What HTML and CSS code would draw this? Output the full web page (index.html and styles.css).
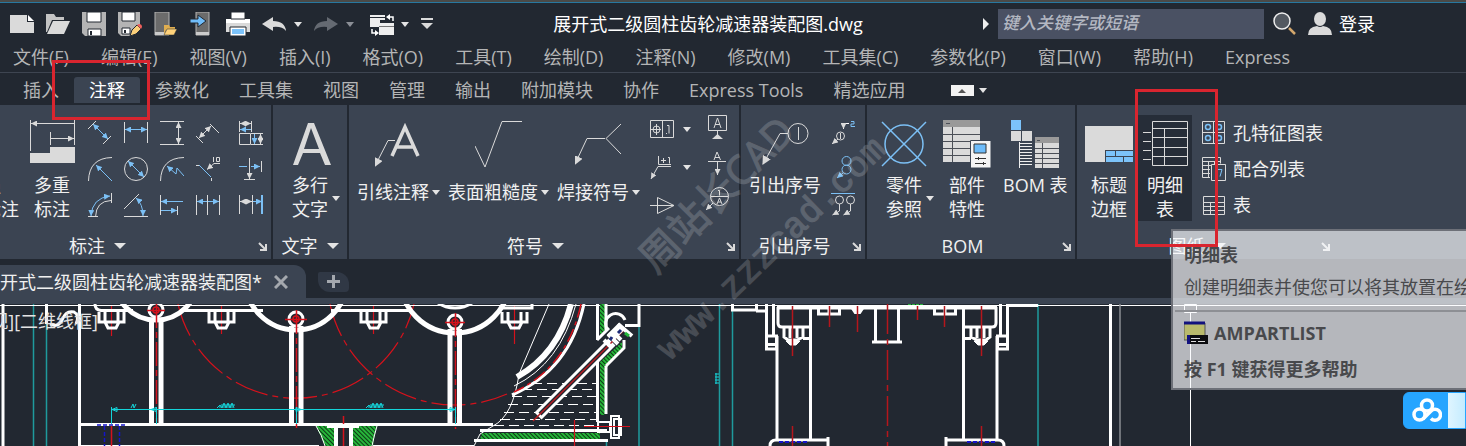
FILE: index.html
```html
<!DOCTYPE html>
<html lang="zh-CN">
<head>
    <title>展开式二级圆柱齿轮减速器装配图.dwg</title>
    <meta charset="utf-8">
    <meta name="viewport" content="width=device-width, initial-scale=1">
    <link rel="stylesheet" href="styles.css">
</head>
<body>
    <!-- shared arrow heads and hatches -->
    <svg class="defs" width="0" height="0" aria-hidden="true">
        <defs>
            <marker id="aw" viewBox="0 0 6 6" refX="6" refY="3" markerWidth="6" markerHeight="6" markerUnits="userSpaceOnUse" orient="auto-start-reverse"><path d="M0 0 6 3 0 6z" fill="#dadada"/></marker>
            <marker id="ab" viewBox="0 0 6 6" refX="6" refY="3" markerWidth="6" markerHeight="6" markerUnits="userSpaceOnUse" orient="auto-start-reverse"><path d="M0 0 6 3 0 6z" fill="#7cc0f5"/></marker>
            <marker id="al" viewBox="0 0 8 8" refX="7" refY="4" markerWidth="9" markerHeight="9" markerUnits="userSpaceOnUse" orient="auto-start-reverse"><path d="M0 0 8 4 0 8z" fill="#dadada"/></marker>
            <pattern id="hatch" width="3" height="3" patternUnits="userSpaceOnUse" patternTransform="rotate(-45)"><rect width="3" height="3" fill="#0d3a16"/><rect width="2" height="3" fill="#27b53a"/></pattern>
        </defs>
    </svg>

    <header class="titlebar">
        <div class="quick">
            <button title="新建"><svg width="24" height="24"><path d="M0 3h17v7h7v11H0z" fill="#dadada"/><path d="M18 3l6 6h-6z" fill="#fff"/></svg></button>
            <button title="打开"><svg width="24" height="24"><path d="M0 2h8l2 3h8v3H6L1 20H0z" fill="#c4c4c4"/><path d="M7 9h17l-6 13H1z" fill="#dadada"/></svg></button>
            <button title="保存"><svg width="24" height="24"><path d="M0 0h24v24H3l-3-3z" fill="#b4b4b4"/><path d="M5 0h14v10H5z" fill="#fff" stroke="#222831"/><path d="M6 17h13v7H6z" fill="#fff" stroke="#222831"/><path d="M8 19h2v4H8z" fill="#222831"/></svg></button>
            <button title="另存为"><svg width="24" height="24"><path d="M0 0h22v15l-8 9H3l-3-3z" fill="#b4b4b4"/><path d="M4 0h13v9H4z" fill="#fff" stroke="#222831"/><path d="M4 16h8v6H4z" fill="#fff" stroke="#222831"/><path d="M6 18h2v3H6z" fill="#222831"/><path d="M12 24l2-6 5-5 4 4-5 5z" fill="#fbd07a" stroke="#222831"/><path d="M19 13l2-1q3 0 3 3l-1 2z" fill="#f0605c"/></svg></button>
            <button title="从移动设备打开"><svg width="24" height="24"><path d="M1 0h14v23H1z" fill="#6b6b6b" stroke="#b4b4b4"/><path d="M1 20h14v3H1z" fill="#ccc"/><path d="M10 13h5l1 2h5v3H12l-2 5z" fill="#e0ae50"/><path d="M13 17h10l-3 6H10z" fill="#ffd27a" stroke="#222831" stroke-width=".5"/></svg></button>
            <button title="保存到移动设备"><svg width="24" height="24"><path d="M6 0h13v23H6z" fill="#6b6b6b" stroke="#b4b4b4"/><path d="M6 20h13v3H6z" fill="#ccc"/><path d="M0 7h8V3l8 6-8 6v-4H0z" fill="#70bdfa" stroke="#222831"/></svg></button>
            <button title="打印"><svg width="24" height="24"><path d="M0 7h24v13H0z" fill="#dadada"/><path d="M0 7h24v4H0z" fill="#fff"/><path d="M5 0h14v7H5z" fill="#fff" stroke="#222831"/><path d="M4 15h16v9H4z" fill="#fff" stroke="#222831"/><path d="M6 17h12v5H6z" fill="#7cc3fa"/></svg></button>
            <button title="放弃"><svg width="24" height="24"><path d="M0 12l11-7v4q12 0 13 10-4-5-13-4v4z" fill="#dadada"/></svg></button>
            <i class="tri"></i>
            <button title="重做"><svg width="24" height="24"><path d="M24 12l-11-7v4Q1 9 0 19q4-5 13-4v4z" fill="#656a72"/></svg></button>
            <i class="tri dim"></i>
            <button title="切换"><svg class="swap" width="25" height="24"><path d="M0 3h15v5h-5v7H0z" fill="#eee"/><path d="M0 5.500h15" stroke="#222831"/><path d="M9 11h15v12H9z" fill="#eee"/><path d="M9 14.500h15" stroke="#777"/><path d="M23 9V5h-4M2 17v4h4" fill="none" stroke="#fff" stroke-width="1.500"/><path d="M16 5l4-3v6zM9 21l-4-3v6z" fill="#fff"/></svg></button>
            <i class="tri"></i>
            <button title="自定义快速访问工具栏"><svg width="12" height="24"><path d="M0 7h12" stroke="#dadada" stroke-width="2"/><path d="M0 11h12l-6 6z" fill="#dadada"/></svg></button>
        </div>
        <div class="filename">展开式二级圆柱齿轮减速器装配图.dwg</div>
        <div class="account">
            <svg width="6" height="12"><path d="M0 0l6 6-6 6z" fill="#eee"/></svg>
            <input class="search" type="text" placeholder="键入关键字或短语" aria-label="搜索">
            <button title="搜索"><svg width="24" height="24"><path d="M16 16l6 6" stroke="#d3a76c" stroke-width="2.500"/><circle cx="9" cy="9" r="8" fill="#535961" stroke="#eee" stroke-width="1.500"/></svg></button>
            <button class="login"><svg width="24" height="24"><ellipse cx="12" cy="7" rx="6" ry="7" fill="#dadada"/><path d="M0 23q0-8 9-9 3 2 6 0 9 1 9 9z" fill="#dadada"/></svg>登录</button>
        </div>
    </header>

    <nav class="menubar">
        <a href="#">文件(F)</a><a href="#">编辑(E)</a><a href="#">视图(V)</a><a href="#">插入(I)</a><a href="#">格式(O)</a><a href="#">工具(T)</a><a href="#">绘制(D)</a><a href="#">注释(N)</a><a href="#">修改(M)</a><a href="#">工具集(C)</a><a href="#">参数化(P)</a><a href="#">窗口(W)</a><a href="#">帮助(H)</a><a href="#">Express</a>
    </nav>

    <nav class="tabs">
        <button>插入</button><button class="active">注释</button><button>参数化</button><button>工具集</button><button>视图</button><button>管理</button><button>输出</button><button>附加模块</button><button>协作</button><button>Express Tools</button><button>精选应用</button>
        <span class="minimize"><svg width="23" height="11"><path d="M0 0h23v11H0z" fill="#f2f2f2"/><path d="M7 8l4-4 4 4z" fill="#555"/></svg><i class="tri"></i></span>
    </nav>

    <main class="ribbon">
        <section class="panel p-dim">
            <div class="tools">
                <button class="big cut"><svg width="48" height="48"><path d="M24 0v27" stroke="#dadada" stroke-width="2"/><path d="M23 30l8 4-8 6z" fill="#fbc35f"/></svg><span>增强<br>尺寸标注</span></button>
                <button class="big"><svg width="48" height="48" fill="none" stroke="#dadada"><path d="M2.500 0v31M46.500 0v25M22.500 12v13"/><path d="M3 3.500h43M23 18.500h23" marker-start="url(#aw)" marker-end="url(#aw)"/><path d="M2 33h20v-6h25v16H2z" fill="#dadada" stroke="none"/></svg><span>多重<br>标注</span></button>
                <div class="grid">
                    <button title="对齐"><svg width="24" height="24" fill="none" stroke="#dadada"><path d="M0 8l8-8M15 23l8-8"/><path d="M5 3l15 15" stroke="#7cc0f5" marker-start="url(#ab)" marker-end="url(#ab)"/></svg></button>
                    <button title="水平"><svg width="24" height="24" fill="none" stroke="#dadada"><path d="M.5 1v21M23.500 1v21"/><path d="M1 8.500h22" stroke="#7cc0f5" marker-start="url(#ab)" marker-end="url(#ab)"/></svg></button>
                    <button title="竖直"><svg width="24" height="24" fill="none" stroke="#dadada"><path d="M0 .5h24M0 23.500h24"/><path d="M18.500 1v22" marker-start="url(#aw)" marker-end="url(#aw)"/></svg></button>
                    <button title="旋转"><svg width="24" height="24" fill="none" stroke="#dadada"><path d="M0 15l7 7M14 3l9 9"/><path d="M3 17L15 5" marker-start="url(#aw)" marker-end="url(#aw)"/></svg></button>
                    <button title="自动"><svg width="24" height="24" fill="none" stroke="#dadada"><path d="M.5 0v11M12.500 0v11M12 12.500h12M12 23.500h12"/><path d="M.5 12.500h11v11H.5z"/><path d="M1 2.500h11" marker-start="url(#aw)" marker-end="url(#aw)"/><path d="M1 8.500h11M15.500 13v10" stroke="#7cc0f5" marker-start="url(#ab)" marker-end="url(#ab)"/><path d="M21.500 13v10" marker-start="url(#aw)" marker-end="url(#aw)"/></svg></button>
                    <button title="半径"><svg width="24" height="24" fill="none" stroke="#dadada"><path d="M.5 24Q1 1 24 .5"/><path d="M24 24L8 8" stroke="#7cc0f5" marker-end="url(#ab)"/></svg></button>
                    <button title="直径"><svg width="24" height="24" fill="none" stroke="#dadada"><circle cx="12" cy="12" r="11.500"/><path d="M4 4l16 16" stroke="#7cc0f5" marker-start="url(#ab)" marker-end="url(#ab)"/></svg></button>
                    <button title="折弯"><svg width="24" height="24" fill="none" stroke="#dadada"><path d="M.5 24Q1 1 24 .5"/><path d="M24 19l-7-8-1 6-9-8" stroke="#7cc0f5" marker-end="url(#ab)"/></svg></button>
                    <button title="倒角"><svg width="24" height="24" fill="none" stroke="#dadada"><path d="M0 8.500h3M15.500 21v3"/><path d="M24 6.500h-6l-7 6" marker-end="url(#aw)"/><path d="M3 8l12 12" stroke="#7cc0f5"/><path d="M17.500 0v5M20.500.5h3v4h-3z"/></svg></button>
                    <button title="坐标"><svg width="24" height="24" fill="none" stroke="#dadada"><path d="M0 9.500h8" stroke="#7cc0f5"/><path d="M12 9.500h9" stroke="#7cc0f5" marker-end="url(#ab)"/><path d="M22.500 4v11M5 22.500h11"/><path d="M10.500 1v21" marker-end="url(#aw)"/></svg></button>
                    <button title="弧长"><svg width="24" height="24" fill="none" stroke="#dadada"><path d="M3 23Q4 5 22 3" stroke="#7cc0f5" marker-start="url(#ab)" marker-end="url(#ab)"/><path d="M7.500 24Q8 8 23 7.500M0 23.500h10M23.500 0v10"/></svg></button>
                    <button title="角度"><svg width="24" height="24" fill="none" stroke="#dadada"><path d="M0 23.500h24M0 16L15 1"/><path d="M12 5q7 6 7 18" stroke="#7cc0f5" marker-start="url(#ab)" marker-end="url(#ab)"/></svg></button>
                    <button title="基线"><svg width="24" height="24" fill="none" stroke="#dadada"><path d="M.5 2v20M17.500 13v9"/><path d="M1 8.500h22M1 17.500h16" stroke="#7cc0f5" marker-start="url(#ab)" marker-end="url(#ab)"/></svg></button>
                    <button title="连续"><svg width="24" height="24" fill="none" stroke="#dadada"><path d="M.5 2v20M11.500 2v20M23.500 2v20"/><path d="M1 8.500h10M12 8.500h11" stroke="#7cc0f5" marker-start="url(#ab)" marker-end="url(#ab)"/></svg></button>
                    <button title="链式"><svg width="24" height="24" fill="none" stroke="#dadada"><path d="M.5 2v19M13.500 2v19"/><path d="M1 8.500h12" marker-start="url(#aw)" marker-end="url(#aw)"/><path d="M14 8.500h9" stroke="#7cc0f5" marker-end="url(#ab)"/><path d="M23 2v19" stroke="#7cc0f5" stroke-width="2"/></svg></button>
                </div>
            </div>
            <footer><button class="name">标注<i class="tri large"></i></button><button class="launch" title="标注设置"><svg width="9" height="9"><path d="M1 1l6 6M8 2v6H2" fill="none" stroke="#dadada" stroke-width="2"/></svg></button></footer>
        </section>

        <section class="panel p-text">
            <div class="tools">
                <button class="big"><svg width="48" height="48"><path d="M7 45L22 3h6l17 42h-6l-5-12H17l-5 12zM18 29h15L25 8z" fill="#dadada"/></svg><span>多行<br>文字</span><i class="tri side"></i></button>
            </div>
            <footer><button class="name">文字<i class="tri large"></i></button></footer>
        </section>

        <section class="panel p-symbol">
            <div class="tools">
                <button class="big wide"><svg width="48" height="48" fill="none" stroke="#dadada"><path d="M20 20.500h-7L0 46" marker-end="url(#al)"/><path d="M17 36L30 7l13 29M22 27h16" stroke-width="3.500"/></svg><span>引线注释<i class="tri"></i></span></button>
                <button class="big wide"><svg width="48" height="48" fill="none" stroke="#dadada"><path d="M0 26l10 21L27 1.500h20"/></svg><span>表面粗糙度<i class="tri"></i></span></button>
                <button class="big wide"><svg width="48" height="48" fill="none" stroke="#dadada"><path d="M30 18.500H12L0 44" marker-end="url(#al)"/><path d="M46 4L31 18.500 46 34"/></svg><span>焊接符号<i class="tri"></i></span></button>
                <div class="column">
                    <button title="形位公差"><svg width="24" height="24" fill="none" stroke="#dadada"><path d="M.5 3.500h23v17H.5zM12.500 3v17M1 12.500h10M6.500 7v11"/><circle cx="6.500" cy="12.500" r="3.500"/><path d="M17 8.500h2v8M16 16.500h1"/></svg><i class="tri"></i></button>
                    <button title="边"><svg width="24" height="24" fill="none" stroke="#dadada"><path d="M21 11.500H8L1 24" marker-end="url(#aw)"/><path d="M8.500 1v8.500H21M11 5.500h5M13.500 3v5M18 2.500h1.500v6"/></svg><i class="tri"></i></button>
                    <button title="锥度"><svg width="24" height="24" fill="none" stroke="#dadada"><path d="M0 12.500h24L7.500 4.500v16L24 12.500"/></svg></button>
                </div>
                <div class="column datum">
                    <button title="基准标识"><svg width="24" height="24" fill="none" stroke="#dadada"><path d="M3.500.5h18v15h-18zM12.500 16v6"/><path d="M9 13l3.500-10L16 13M10 9.500h5"/><path d="M7 24l5.500-5 5.500 5z" fill="#dadada" stroke="none"/></svg></button>
                    <button title="基准目标"><svg width="24" height="24" fill="none" stroke="#dadada"><path d="M3 10.500h18"/><path d="M12.500 11v13" marker-end="url(#aw)"/><path d="M9 9l3-8 3.500 8M10 6.500h5"/></svg></button>
                    <button title="基准"><svg width="24" height="24" fill="none" stroke="#dadada"><circle cx="14.500" cy="9.500" r="9"/><path d="M6 9.500h17M13 3.500h1.500v5M12 17l2.500-6 2.500 6M13 15h3"/><path d="M8 16l-7 7" marker-end="url(#aw)"/></svg></button>
                </div>
            </div>
            <footer><button class="name">符号<i class="tri large"></i></button><button class="launch" title="符号设置"><svg width="9" height="9"><path d="M1 1l6 6M8 2v6H2" fill="none" stroke="#dadada" stroke-width="2"/></svg></button></footer>
        </section>

        <section class="panel p-balloon">
            <div class="tools">
                <button class="big"><svg width="48" height="48" fill="none" stroke="#dadada"><circle cx="37" cy="13.500" r="10"/><path d="M37.500 7v13M27 13.500h-8L2 44" marker-end="url(#al)"/></svg><span>引出序号</span></button>
                <div class="column">
                    <button title="重新编号"><svg width="25" height="24" fill="none" stroke="#dadada"><circle cx="9.500" cy="16" r="4"/><path d="M9.500 13v6"/><path d="M7 19l-6 5" marker-end="url(#aw)"/><path d="M18 3.500h-5.500V9" stroke="#fff" marker-end="url(#aw)"/><path d="M20 1.500h3v2.500h-3v2.500h4" stroke="#7cc0f5"/></svg></button>
                    <button title="合并"><svg width="25" height="24" fill="none" stroke="#7cc0f5"><circle cx="15.500" cy="5" r="4.500"/><circle cx="15.500" cy="13.500" r="4.500"/><path d="M12 17l-6 5" marker-end="url(#ab)"/></svg></button>
                    <button title="排列"><svg width="25" height="24" fill="none" stroke="#dadada"><path d="M0 1.500h24" stroke="#7cc0f5"/><circle cx="8.500" cy="8" r="4"/><circle cx="19.500" cy="8" r="4"/><path d="M8.500 12v7l-7 4" marker-end="url(#aw)"/><path d="M19.500 12v7l-7 4" marker-end="url(#aw)"/></svg></button>
                </div>
            </div>
            <footer><button class="name">引出序号</button><button class="launch" title="引出序号设置"><svg width="9" height="9"><path d="M1 1l6 6M8 2v6H2" fill="none" stroke="#dadada" stroke-width="2"/></svg></button></footer>
        </section>

        <section class="panel p-bom">
            <div class="tools">
                <button class="big"><svg width="48" height="48" fill="none" stroke="#7cc0f5" stroke-width="1.500"><circle cx="24" cy="24" r="19"/><path d="M2 2l44 44M46 2L2 46"/></svg><span>零件<br>参照</span><i class="tri side"></i></button>
                <button class="big"><svg width="48" height="48"><path d="M0 0h37v42H0z" fill="#dadada"/><path d="M0 0h37v7H0z" fill="#999"/><path d="M0 14.500h37M0 21.500h37M0 28.500h37M0 35.500h37M9.500 7v35M3 3.500h4" stroke="#4b4f57"/><path d="M27.500 20.500H48V48H27.500z" fill="#f4f4f4" stroke="#3b4452"/><path d="M31 24h12v9H31z" fill="#6dbcfa" stroke="#333"/><path d="M32 38.500h11M32 43.500h11M35.500 37v3M40.500 42v3" stroke="#333"/></svg><span>部件<br>特性</span></button>
                <button class="big"><svg width="48" height="48"><path d="M0 0h10v10H0z" fill="#7cc3fa"/><path d="M0 11h10v10H0zM11 11h10v10H11z" fill="#dadada"/><path d="M9 23.500h12M9 26.500h12M9 29.500h12M9 32.500h12M9 35.500h12M9 38.500h12M9 41.500h12M9 44.500h12M8.500 22v26" stroke="#eee" fill="none"/><path d="M24 17h24v31H24z" fill="#dadada"/><path d="M24 17h24v6H24z" fill="#999"/><path d="M24 28.500h24M24 33.500h24M24 38.500h24M24 43.500h24M31.500 23v25M26 20.500h3" stroke="#4b4f57"/></svg><span>BOM 表</span></button>
            </div>
            <footer><button class="name">BOM</button><button class="launch" title="BOM 设置"><svg width="9" height="9"><path d="M1 1l6 6M8 2v6H2" fill="none" stroke="#dadada" stroke-width="2"/></svg></button></footer>
        </section>

        <section class="panel p-sheet">
            <div class="tools">
                <button class="big"><svg width="48" height="48"><path d="M0 6h48v36H0z" fill="#dadada"/><path d="M21 31h27v11H21z" fill="#7cc3fa"/><path d="M20 30.500h28M20 36.500h28M20.500 30v12M30.500 30v6M38.500 37v5" stroke="#3b4452"/></svg><span>标题<br>边框</span></button>
                <button class="big hover"><svg width="48" height="48" fill="none" stroke="#dadada"><path d="M11.500 1.500h35v44h-35zM11 8.500h35M11 17.500h35M11 27.500h35M11 36.500h35M23.500 9v36M2 12.500h8M2 21.500h8M2 30.500h8M2 39.500h8"/></svg><span>明细<br>表</span></button>
                <div class="list">
                    <button><svg width="24" height="24" fill="none" stroke="#dadada"><path d="M.5.5h22v22H.5zM11.500 0v23M0 11.500h23"/><g stroke="#7cc0f5" stroke-width="1.500"><circle cx="6" cy="6" r="2.500"/><circle cx="17" cy="6" r="2.500"/><circle cx="6" cy="17" r="2.500"/><circle cx="17" cy="17" r="2.500"/></g></svg>孔特征图表</button>
                    <button><svg width="24" height="24" fill="none" stroke="#dadada"><path d="M8 20.500H.5V.5h18v6M0 4.500h19M0 8.500h9M0 12.500h8M0 16.500h8M6.500 4v16M12.500 4v3M9.500 7.500h14v16h-14z"/><path d="M13.500 12v7M16 12.500h4l-2 7" stroke="#7cc0f5"/></svg>配合列表</button>
                    <button><svg width="24" height="24" fill="none" stroke="#dadada"><path d="M1.500 3.500h21v18h-21zM1 9.500h22M1 13.500h22M1 17.500h22M8.500 9v12M15.500 9v12"/></svg>表</button>
                </div>
            </div>
            <footer><button class="name">图纸<i class="tri large"></i></button><button class="launch" title="图纸设置"><svg width="9" height="9"><path d="M1 1l6 6M8 2v6H2" fill="none" stroke="#dadada" stroke-width="2"/></svg></button></footer>
        </section>
    </main>

    <div class="files">
        <div class="file">展开式二级圆柱齿轮减速器装配图*<button title="关闭"><svg width="14" height="14"><path d="M1 1l12 12M13 1L1 13" stroke="#a4a8ae" stroke-width="3"/></svg></button></div>
        <button class="add" title="新图形"><svg width="13" height="13"><path d="M6.500 0v13M0 6.500h13" stroke="#a4a8ae" stroke-width="3"/></svg></button>
    </div>

    <div class="canvas">
        <svg viewBox="0 304 1466 142" preserveAspectRatio="xMinYMin slice" fill="none">
            <!-- teal dimension lines -->
            <g stroke="#1f9a9d" stroke-width="1.500">
                <path d="M33.500 304v142M46.500 324v122M639 323v123M719.500 304v142M732.500 308v138M1038 304v142M606.500 441v5"/>
            </g>
            <!-- front view -->
            <g stroke="#d5121c" stroke-width="1.200">
                <path d="M178 304A121 121 0 0 0 414 304M330 304A128 128 0 0 0 507 394" stroke-dasharray="34 5 6 5"/>
                <path d="M111.500 306v30M221.500 306v28M373.500 306v28M514.500 306v38"/>
            </g>
            <g stroke="#fff" stroke-width="3">
                <path d="M0 305.500h1466" stroke-width="1"/>
                <path d="M3 304v142M79.500 304v142M46.500 304v20M95 304q0 6 6 6.500h32M181 310.500h82M331 310.500h80M79 424.500h414"/>
                <path d="M50 324q8 4 12-4 4-10 12-8 6 3 2 12"/>
                <circle cx="156" cy="278" r="42" stroke-width="5"/>
                <circle cx="296" cy="279" r="51" stroke-width="5"/>
                <circle cx="455" cy="278" r="55" stroke-width="5"/>
                <circle cx="455" cy="277" r="31"/>
                <circle cx="156" cy="310" r="7" fill="#222831"/><circle cx="296" cy="319" r="7" fill="#222831"/><circle cx="455" cy="322" r="7" fill="#222831"/>
                <path d="M151.500 318v106M161 318v106M291.500 326v98M301 326v98M450 329v95M459.500 329v95" stroke-width="5"/>
                <path d="M79 445.500h240M372 445.500h102" stroke-width="1"/>
            </g>
            <g stroke="#fff" stroke-width="3">
                <path d="M99 312v10h25v-10M105 312v10M118 312v10M105 322l3 6h8l3-6"/>
                <path d="M209 312v10h25v-10M215 312v10M228 312v10M215 322l3 6h8l3-6"/>
                <path d="M361 312v10h25v-10M367 312v10M380 312v10M367 322l3 6h8l3-6"/>
                <path d="M502 312v10h25v-10M508 312v10M521 312v10M508 322l3 6h8l3-6M500 308h32v-4"/>
            </g>
            <g stroke="#d5121c" stroke-width="1.500">
                <path d="M156.500 304v118M296.500 310v118M455.500 313v116" stroke-dasharray="24 4 6 4"/>
                <path d="M147 310.500h18M285 319.500h22M445 322.500h20M111.500 426v20M343.500 416v30"/>
                <circle cx="156" cy="310" r="3"/><circle cx="296" cy="319" r="3"/><circle cx="455" cy="322" r="3"/>
            </g>
            <g stroke="#14d5da" stroke-width="1">
                <path d="M111.500 407v17M156.500 407v17M296.500 407v17M455.500 407v17M111 409.500h344"/>
                <path d="M112 409.500l5-2v4zM151 409.500l5-2v4zM301 409.500l-5-2v4zM455 409.500l-5-2v4z"/>
                <path d="M131 408l2-4 1 4 2-4M217 408l3-3 2 3 2-5 2 5 2-5 2 5 2-5 2 5M366 408l3-3 2 3 2-5 2 5 2-5 2 5 2-5 2 5M221 405h14M370 405h14M219 407h14M368 407h14M715 374h4M715 377h4M715 380h4M715 383h4M716 373v11"/>
            </g>
            <path d="M97 425h29M104.500 426v20M119.500 426v20" stroke="#1514c8" stroke-width="1.500" stroke-dasharray="4 2"/>
            <path d="M316 426h18v20h-9zM352 426h25q-3 12-4 20h-21zM600 304h5v26l-5 5zM600 362l22-20v8l-17 17v48h-5zM482 433h118v6h-120z" fill="url(#hatch)"/>
            <path d="M316 426q6 9 9 20M377 426q-3 10-5 20" stroke="#fff"/>
            <path d="M327 426h32M336 426v20M351 426v20" stroke="#fff" stroke-width="4"/>
            <!-- oil level -->
            <g stroke="#fff" stroke-width="1" stroke-dasharray="10 5">
                <path d="M532 383.500h64M522 389.500h74M512 396.500h84M508 404.500h88M504 412.500h92M500 419.500h96M494 425.500h102"/>
            </g>
            <!-- housing wall and dipstick -->
            <g stroke="#fff" stroke-width="3">
                <path d="M549 304l-30 70q-6 42-26 52l-13 8-6 12" stroke-width="1"/>
                <path d="M571 304q-13 50-54 73" stroke-width="6"/>
                <path d="M584 304q-14 66-72 91"/>
                <path d="M576 304q-16 60-62 82" stroke-width="1"/>
                <path d="M597.500 304v36M597.500 362v60M606 304v26M606 366v48M480 430.500h127M474 440.500h134"/>
                <path d="M606 366l18-18v-8M597 340l12-12"/>
                <path d="M608 330a10 10 0 1 1 17-10"/>
                <path d="M625 325.500h14V304"/>
                <path d="M598 422h12v10h-12zM611 416h8v22h-8zM614 419h7v16h-7z" stroke-width="2"/>
            </g>
            <path d="M538 416l74-74" stroke="#fff" stroke-width="10"/>
            <path d="M540 414l68-68" stroke="#222831" stroke-width="4"/>
            <path d="M533 421l92-92" stroke="#b81a20" stroke-width="1.500"/>
            <path d="M604 340l8 8M608 334l10 10M618 324l14 12M613 332l8 8" stroke="#fff" stroke-width="4"/>
            <path d="M610 338l12-12" stroke="#fff" stroke-width="9"/>
            <path d="M610 340l2-3M618 333l3-3" stroke="#1e2a78" stroke-width="3"/>
            <path d="M625 333l4 3" stroke="#27b53a" stroke-width="3"/>
            <path d="M581 304q-14 64-67 88" stroke="#d5121c" stroke-width="1.500" stroke-dasharray="14 4 4 4"/>
            <path d="M574.500 420v26M584 426.500h46" stroke="#d5121c" stroke-width="1.200"/>

            <!-- side view, right half mirrored about x = 887 -->
            <g id="half" stroke="#fff" stroke-width="3">
                <path d="M777 307.500h110" stroke-width="4"/>
                <path d="M766.500 304v45h10v-13h-10M773.500 304v32M777 336v104M810.500 308v132M778 307v16q0 4 4 4h28M766 344.500h10"/>
                <path d="M784 328v9l4 3h9l6-3v-9M790 328v10M797 328v10M803 338.500h8"/>
                <path d="M786 341h14l-4 4h-6z" fill="#fff" stroke-width="1"/>
                <path d="M818.500 308v6h21v-6M829 308v6M875.500 308v33M872 342h15"/>
                <path d="M770 446q0-6 6-6h52M828 437v9"/>
                <path d="M779 442h29" stroke="#1514c8" stroke-width="2" stroke-dasharray="4 2"/>
                <path d="M792.500 306v50M792.500 426v20M829.500 306v21" stroke="#b5161c" stroke-width="1.500"/>
            </g>
            <use href="#half" transform="translate(1774 0) scale(-1 1)"/>
            <path d="M732.500 304v6h24v-6M756 311h11M1006 305.500h32" stroke="#fff" stroke-width="3"/>
            <path d="M853 310h9l-2 3h-5z" fill="#fff" stroke="#fff" stroke-width="2"/>
            <path d="M857.500 306v26M917.500 306v14M887.500 304v142" stroke="#b5161c" stroke-width="1.500" stroke-dasharray="30 5 6 5"/>
            <path d="M908 304.500h16" stroke="#27b53a" stroke-dasharray="3 1"/>
            <path d="M1110.500 304v142" stroke="#fff" stroke-width="3"/>
            <path d="M1120 304v142" stroke="#8b8e93" stroke-width="1.500"/>
            <!-- cursor -->
            <path d="M1184.500 304.500h12v8h-12zM1190.500 313v133" stroke="#fff"/>
            <text class="view" x="98" y="328" text-anchor="end">[俯视][二维线框]</text>
        </svg>
    </div>

    <svg class="watermark" width="300" height="300" aria-hidden="true">
        <text class="zh" transform="translate(54 176) rotate(-45)">周站长CAD</text>
        <text class="url" transform="translate(68 262) rotate(-44)">www.zzzcad.com</text>
    </svg>

    <div class="tooltip" role="tooltip">
        <strong>明细表</strong>
        <p>创建明细表并使您可以将其放置在绘图中</p>
        <hr>
        <strong class="command"><svg width="24" height="24"><path d="M0 2h21v17H0z" fill="#b9ba6c" stroke="#555"/><path d="M0 2h21" stroke="#12127e" stroke-width="3"/><path d="M3 14h21v9H3z" fill="#0c0d10"/><path d="M3 14h3v9H3z" fill="#12127e"/><path d="M7 17.500h9M7 20.500h5M14 20.500h7" stroke="#ddd"/></svg>AMPARTLIST</strong>
        <strong>按 F1 键获得更多帮助</strong>
    </div>

    <div class="cloud">
        <svg width="30" height="26" fill="none" stroke="#fff" stroke-width="3.500"><circle cx="15" cy="7.500" r="5.500"/><circle cx="7.500" cy="16.500" r="5.500"/><path d="M11 21l8-8a5.500 5.500 0 1 1 0 7.500"/></svg>
    </div>

    <div class="mark mark-tab"></div>
    <div class="mark mark-partlist"></div>
</body>
</html>
```
FILE: styles.css
```css
* {
    box-sizing: border-box;
}
body {
    position: relative;
    display: flex;
    flex-direction: column;
    height: 100vh;
    margin: 0;
    overflow: hidden;
    background: #222831;
    color: #f0f0f0;
    font-family: "Open Sans", "Noto Sans CJK SC", sans-serif;
    font-size: 18px;
    line-height: 24px;
    white-space: nowrap;
}
button {
    display: flex;
    align-items: center;
    padding: 0;
    border: none;
    background: none;
    color: inherit;
    font: inherit;
}
svg {
    display: block;
    flex: none;
}
.defs {
    position: absolute;
}
.tri {
    flex: none;
    border: 4px solid transparent;
    border-top: 5px solid #e4e4e4;
    border-bottom: none;
}
.tri.dim {
    border-top-color: #8b8f96;
}
.tri.large {
    border-width: 6px 6px 0;
}

/* title bar */
.titlebar {
    display: flex;
    flex: none;
    align-items: center;
    height: 46px;
    padding: 0 91px 0 10px;
    border-top: 2px solid #4a4a48;
    box-shadow: inset 0 1px #2878a0;
}
.quick {
    display: flex;
    align-items: center;
    gap: 12px;
}
.quick .tri {
    margin-left: -4px;
}
.swap {
    margin: 0 -2px 0 4px;
}
.filename {
    flex: 1;
    text-align: center;
    color: #fff;
}
.account {
    display: flex;
    align-items: center;
    gap: 9px;
}
.search {
    width: 266px;
    height: 30px;
    padding: 0 4px 3px;
    border: none;
    background: #4a5163;
    color: #fff;
    font: italic 500 17px "Open Sans", "Noto Sans CJK SC", sans-serif;
}
.search::placeholder {
    color: #b4b8c2;
}
.login {
    gap: 7px;
    margin-left: 2px;
    color: #fff;
}

/* menus */
.menubar {
    display: flex;
    flex: none;
    align-items: flex-start;
    gap: 32px;
    height: 27px;
    padding-left: 13px;
    border-bottom: 1px solid #3e4551;
    line-height: 22px;
}
.menubar a {
    color: #b4b5b6;
    text-decoration: none;
}
.tabs {
    display: flex;
    flex: none;
    align-items: center;
    height: 32px;
    padding: 4px 8px 2px;
    color: #b4b5b6;
}
.tabs button {
    height: 26px;
    padding: 0 15px;
}
.tabs .active {
    border-radius: 3px 3px 0 0;
    background: #3b4452;
    color: #fff;
}
.minimize {
    display: flex;
    align-items: center;
    gap: 5px;
    margin-left: 31px;
}

/* ribbon */
.ribbon {
    display: flex;
    flex: none;
    gap: 2px;
    height: 154px;
}
.panel {
    display: flex;
    flex: none;
    flex-direction: column;
    justify-content: space-between;
    background: #3b4452;
}
.tools {
    display: flex;
    align-items: flex-start;
    padding-top: 10px;
}
.panel footer {
    display: flex;
    align-items: center;
    height: 26px;
}
.name {
    flex: 1;
    justify-content: center;
    gap: 9px;
}
.launch {
    width: 17px;
    padding-left: 4px;
}
.big {
    position: relative;
    flex-direction: column;
    gap: 5px;
    min-width: 54px;
    min-height: 106px;
    padding-top: 5px;
    text-align: center;
}
.big.wide {
    gap: 12px;
}
.big.wide span {
    display: flex;
    align-items: center;
    gap: 3px;
}
.big .side {
    position: absolute;
    right: -3px;
    bottom: 20px;
}
.grid {
    display: grid;
    grid-template-columns: 24px 24px 24px 24px 31px;
    gap: 12px;
    padding-top: 6px;
}
.grid button {
    justify-self: end;
}
.column {
    display: flex;
    flex-direction: column;
    gap: 12px;
    padding-top: 5px;
}
.column button {
    gap: 9px;
}
.list {
    display: flex;
    flex-direction: column;
    gap: 12px;
    padding-top: 6px;
}
.list button {
    gap: 7px;
}
.p-dim {
    width: 330px;
    margin-left: -59px;
}
.p-dim .tools {
    padding-left: 6px;
}
.p-dim .big {
    margin-right: 9px;
}
.p-dim .cut {
    margin-right: 6px;
}
.p-text {
    width: 74px;
}
.p-text .tools {
    padding-left: 10px;
}
.p-symbol {
    width: 390px;
}
.p-symbol .tools {
    gap: 8px;
    padding-left: 8px;
}
.p-symbol .column {
    padding-top: 2px;
    gap: 14px;
    margin-left: 2px;
}
.p-symbol .datum {
    padding-top: 0;
    gap: 12px;
    margin-left: 6px;
}
.p-balloon {
    width: 124px;
}
.p-balloon .tools {
    gap: 10px;
    padding-left: 8px;
}
.p-bom {
    width: 208px;
}
.p-bom .tools {
    gap: 9px;
    padding-left: 10px;
}
.p-sheet {
    flex: 1;
}
.p-sheet .tools {
    gap: 2px;
    padding-left: 5px;
}
.p-sheet .list {
    margin-left: 8px;
}
.p-sheet footer {
    width: 257px;
}
.hover {
    background: #262d38;
}

/* drawing tabs */
.files {
    display: flex;
    flex: none;
    gap: 12px;
    height: 45px;
    padding-top: 6px;
    border-bottom: 6px solid #3b4452;
}
.file {
    display: flex;
    align-items: center;
    gap: 12px;
    margin-left: -18px;
    padding-right: 18px;
    border-radius: 0 12px 0 0;
    background: #3b4452;
}
.add {
    justify-content: center;
    align-self: center;
    width: 31px;
    height: 20px;
    border-radius: 2px 12px 4px 12px;
    background: #303845;
}
.canvas {
    flex: 1;
    min-height: 0;
    overflow: hidden;
}
.canvas svg {
    width: 100%;
    height: 100%;
}
.view {
    fill: #e4e4e4;
    font-size: 18px;
}

/* floating items */
.watermark {
    position: absolute;
    top: 99px;
    left: 602px;
    fill: #fff;
    stroke: #fff;
    opacity: 0.17;
}
.zh {
    font-size: 40px;
}
.url {
    font-family: "Liberation Mono", monospace;
    font-size: 36px;
}
.tooltip {
    position: absolute;
    top: 229px;
    left: 1171px;
    right: -20px;
    height: 161px;
    padding: 12px 11px;
    border: 2px solid #6d7078;
    background: rgba(250, 252, 255, 0.68);
    color: #48494c;
    overflow: hidden;
}
.tooltip strong {
    display: block;
}
.tooltip p {
    margin: 8px 0;
}
.tooltip hr {
    margin: 11px -9px 9px;
    border: none;
    border-top: 2px solid #8d8f94;
}
.tooltip .command {
    display: flex;
    align-items: center;
    gap: 6px;
    margin-bottom: 12px;
}
.cloud {
    position: absolute;
    top: 392px;
    right: 0;
    display: flex;
    align-items: center;
    width: 63px;
    height: 37px;
    padding-left: 8px;
    border: 1px solid #26a5ff;
    border-radius: 6px 0 0 6px;
    background: linear-gradient(90deg, #26a5ff 44px, #dff5ff 44px, #c4ecff);
}
.mark {
    position: absolute;
    border: 3px solid #d9252f;
}
.mark-tab {
    top: 60px;
    left: 52px;
    width: 98px;
    height: 60px;
}
.mark-partlist {
    top: 89px;
    left: 1135px;
    width: 83px;
    height: 158px;
}
```
